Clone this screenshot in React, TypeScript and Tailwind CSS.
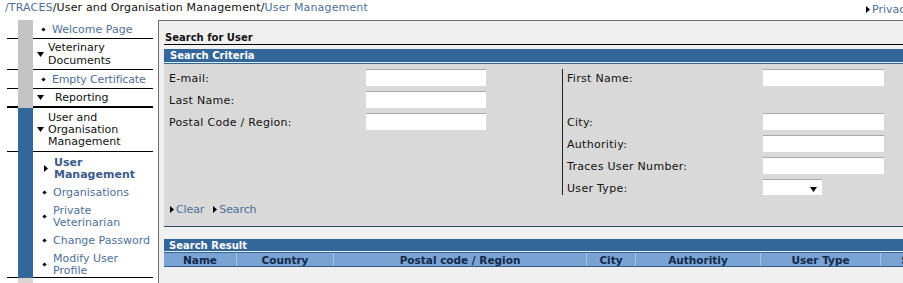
import React from 'react';

const link = 'text-[#4f6f98]';

function Diamond() {
  return <span className="inline-block w-[3px] h-[3px] bg-black rotate-45 shrink-0" />;
}

function Down() {
  return (
    <svg width="7" height="5" viewBox="0 0 7 5" className="shrink-0">
      <polygon points="0,0 7,0 3.5,5" fill="#000" />
    </svg>
  );
}

function Right() {
  return (
    <svg width="4" height="7" viewBox="0 0 4 7" className="shrink-0">
      <polygon points="0,0 4,3.5 0,7" fill="#000" />
    </svg>
  );
}

function NavRow({ bar, thick, className, children }: { bar: string; thick?: boolean; className: string; children?: React.ReactNode }) {
  const b = thick ? 'border-b-2' : 'border-b';
  return (
    <div className="flex">
      <div className={`w-[11px] shrink-0 border-black ${b}`} />
      <div className={`w-[15px] shrink-0 ${bar}`} />
      <div className={`w-[120px] shrink-0 border-black ${b} ${className}`}>{children}</div>
    </div>
  );
}

function SubItem({ active, children }: { active?: boolean; children: React.ReactNode }) {
  return (
    <div className="h-[24px] flex items-center">
      {active ? (
        <span className="pl-[11px] pr-[6px] flex"><Right /></span>
      ) : (
        <span className="pl-[10px] pr-[7px] flex"><Diamond /></span>
      )}
      <div className={active ? 'font-bold text-[#3b5b88] leading-[12px] mt-[2px]' : `${link} leading-[12px] mt-[2px]`}>{children}</div>
    </div>
  );
}

function Sidebar() {
  return (
    <div className="w-[146px] ml-[7px] mr-[5px] shrink-0">
      <NavRow bar="bg-[#c4c4c4]" className="h-[19px] flex items-center">
        <span className="pl-[9px] pr-[7px] flex"><Diamond /></span>
        <span className={link}>Welcome Page</span>
      </NavRow>
      <NavRow bar="bg-[#c4c4c4]" className="h-[31px] flex items-center">
        <span className="pl-[4px] pr-[4px] flex"><Down /></span>
        <div className="leading-[13px]">Veterinary<br />Documents</div>
      </NavRow>
      <NavRow bar="bg-[#c4c4c4]" className="h-[19px] flex items-center">
        <span className="pl-[9px] pr-[7px] flex"><Diamond /></span>
        <span className={`${link} tracking-[-0.15px]`}>Empty Certificate</span>
      </NavRow>
      <NavRow bar="bg-[#c4c4c4]" thick className="h-[19px] flex items-center">
        <span className="pl-[4px] pr-[11px] flex"><Down /></span>
        <span>Reporting</span>
      </NavRow>
      <NavRow bar="bg-[#336699]" className="h-[44px] flex items-center">
        <span className="pl-[4px] pr-[4px] flex"><Down /></span>
        <div className="leading-[12px] mt-[1px]">User and<br />Organisation<br />Management</div>
      </NavRow>
      <NavRow bar="bg-[#336699]" className="h-[126px] pt-[4px]">
        <SubItem active>User<br />Management</SubItem>
        <SubItem>Organisations</SubItem>
        <SubItem>Private<br />Veterinarian</SubItem>
        <SubItem>Change Password</SubItem>
        <SubItem>Modify User<br />Profile</SubItem>
      </NavRow>
      <div className="flex">
        <div className="w-[11px] shrink-0" />
        <div className="w-[15px] h-[10px] shrink-0 bg-[#dcd3d3]" />
      </div>
    </div>
  );
}

function Field({ label, labelW, inputW, empty }: { label?: string; labelW: string; inputW: string; empty?: boolean }) {
  return (
    <div className="flex items-start h-[17px] mb-[5px]">
      <div className={`${labelW} shrink-0 pt-[3px] tracking-[0.3px]`}>{label}</div>
      {!empty && <div className={`${inputW} h-[17px] bg-white border-t border-[#a9a9a9]`} />}
    </div>
  );
}

function Main() {
  const cols = [
    { w: 'w-[72px]', t: 'Name' },
    { w: 'w-[97px]', t: 'Country' },
    { w: 'w-[253px]', t: 'Postal code / Region' },
    { w: 'w-[49px]', t: 'City' },
    { w: 'w-[125px]', t: 'Authoritiy' },
    { w: 'w-[120px]', t: 'User Type' },
    { w: 'w-[80px]', t: 'Status' },
  ];
  return (
    <div className="flex-1 min-w-0 h-[263px] overflow-hidden border-l border-t border-[#6e6e6e] bg-[#f0f0f0] pl-[5px]">
      <div className="h-[24px] pt-[11px] pl-[1px] font-bold text-[10px] leading-[12px] border-b border-black">Search for User</div>
      <div className="mt-[4px] h-[13px] bg-[#336699] text-white font-bold text-[10px] leading-[14px] pl-[6px]">Search Criteria</div>
      <div className="h-[1px] bg-[#e6edf5]" />
      <div className="h-[1px] bg-[#336699]" />
      <div className="h-[163px] bg-[#d9d9d9] pt-[5px] border-b border-[#2e4a6a]">
        <div className="flex">
          <div className="w-[398px] shrink-0 pl-[5px]">
            <Field label="E-mail:" labelW="w-[197px]" inputW="w-[120px]" />
            <Field label="Last Name:" labelW="w-[197px]" inputW="w-[120px]" />
            <Field label="Postal Code / Region:" labelW="w-[197px]" inputW="w-[120px]" />
          </div>
          <div className="border-l border-[#222] pl-[4px] h-[126px]">
            <Field label="First Name:" labelW="w-[196px]" inputW="w-[121px]" />
            <Field labelW="w-[196px]" inputW="w-[121px]" empty />
            <Field label="City:" labelW="w-[196px]" inputW="w-[121px]" />
            <Field label="Authoritiy:" labelW="w-[196px]" inputW="w-[121px]" />
            <Field label="Traces User Number:" labelW="w-[196px]" inputW="w-[121px]" />
            <div className="flex items-start h-[16px]">
              <div className="w-[196px] shrink-0 pt-[3px] tracking-[0.3px]">User Type:</div>
              <div className="w-[59px] h-[16px] bg-white border-t border-[#a9a9a9] flex justify-end items-center pr-[5px] pt-[4px]">
                <Down />
              </div>
            </div>
          </div>
        </div>
        <div className="mt-[7px] h-[14px] flex items-center pl-[6px]">
          <Right />
          <span className={`${link} pl-[2px] pr-[9px] tracking-[-0.1px]`}>Clear</span>
          <Right />
          <span className={`${link} pl-[2px] tracking-[-0.1px]`}>Search</span>
        </div>
      </div>
      <div className="mt-[12px] h-[12px] bg-[#336699] text-white font-bold text-[10px] leading-[13px] pl-[5px]">Search Result</div>
      <div className="h-[1px] bg-[#e6edf5]" />
      <div className="h-[1px] bg-[#336699]" />
      <div className="flex h-[14px] bg-[#78a3d3] border-b border-[#2f5a8a] font-bold text-[10.5px] text-[#13294a] leading-[14px]">
        {cols.map((c, i) => (
          <div key={c.t} className={`${c.w} shrink-0 text-center ${i > 0 ? 'border-l border-[#a9c3e0]' : ''}`}>{c.t}</div>
        ))}
      </div>
    </div>
  );
}

export default function App() {
  return (
    <div className="w-full h-[283px] overflow-hidden bg-white text-[11px] leading-[13px] text-[#111] whitespace-nowrap font-['DejaVu_Sans',Verdana,sans-serif]">
      <div className="flex h-[20px]">
        <div className="w-[866px] shrink-0 pl-[5px] pt-[1px] tracking-[0.16px]">
          <span className={link}>/TRACES</span>
          <span>/User and Organisation Management/</span>
          <span className={link}>User Management</span>
        </div>
        <div className="flex items-center gap-[2px] h-[13px] mt-[3px] shrink-0">
          <Right />
          <span className={link}>Privacy Statement</span>
        </div>
      </div>
      <div className="flex">
        <Sidebar />
        <Main />
      </div>
    </div>
  );
}
